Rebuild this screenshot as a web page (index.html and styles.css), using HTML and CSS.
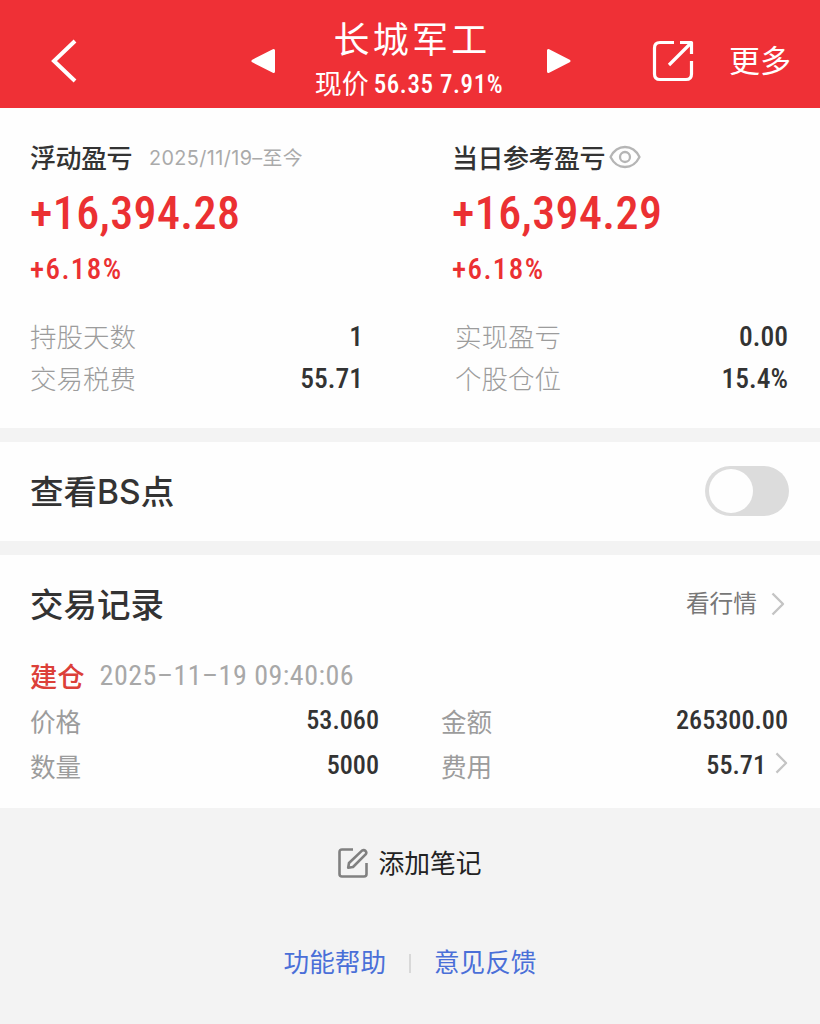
FILE: index.html
```html
<!DOCTYPE html>
<html lang="zh-CN">
<head>
  <meta charset="UTF-8" />
  <title>长城军工 - 持仓详情</title>
  <meta name="viewport" content="width=device-width, initial-scale=1.0"/>
  <link rel="stylesheet" href="styles.css">
</head>
<body>
  <header class="topbar">
    <svg class="back" viewBox="0 0 28 44"><path d="M25 2 L4 22 L25 42"/></svg>
    <div class="stock">
      <svg class="arrow" viewBox="0 0 26 26"><path d="M23.5 2.5 V23.5 L3 13 Z"/></svg>
      <div class="stock-info">
        <h1>长城军工</h1>
        <p><span class="label">现价</span> <span class="num">56.35 7.91%</span></p>
      </div>
      <svg class="arrow" viewBox="0 0 26 26"><path d="M2.5 2.5 V23.5 L23 13 Z"/></svg>
    </div>
    <svg class="share" viewBox="0 0 42 42">
      <path d="M22 2.5 H8 Q2.5 2.5 2.5 8 V34 Q2.5 39.5 8 39.5 H34 Q39.5 39.5 39.5 34 V21"/>
      <path d="M28 2.5 H39.5 V14 M38.5 3.5 L17 25"/>
    </svg>
    <span class="more">更多</span>
  </header>

  <section class="summary">
    <div class="col">
      <div class="col-title">浮动盈亏<span class="range">2025/11/19–至今</span></div>
      <div class="amount">+16,394.28</div>
      <div class="percent">+6.18%</div>
      <div class="row"><span>持股天数</span><b>1</b></div>
      <div class="row"><span>交易税费</span><b>55.71</b></div>
    </div>
    <div class="col col-right">
      <div class="col-title">当日参考盈亏
        <svg class="eye" viewBox="0 0 32 24"><path d="M1.5 12 C5 5 10 2 16 2 S27 5 30.5 12 C27 19 22 22 16 22 S5 19 1.5 12 Z"/><circle cx="16" cy="12" r="5"/></svg>
      </div>
      <div class="amount">+16,394.29</div>
      <div class="percent">+6.18%</div>
      <div class="row"><span>实现盈亏</span><b>0.00</b></div>
      <div class="row"><span>个股仓位</span><b>15.4%</b></div>
    </div>
  </section>

  <section class="bs">
    <h2>查看<span class="latin">BS</span>点</h2>
    <div class="switch"><i></i></div>
  </section>

  <section class="records">
    <div class="records-head">
      <h2>交易记录</h2>
      <a class="quote">看行情 <svg class="chevron" viewBox="0 0 14 24"><path d="M1.5 1.5 L12 12 L1.5 22.5"/></svg></a>
    </div>
    <div class="record-time"><strong>建仓</strong><span>2025–11–19 09:40:06</span></div>
    <div class="record-grid">
      <div class="cell"><span>价格</span><b>53.060</b></div>
      <div class="cell"><span>金额</span><b>265300.00</b></div>
      <div class="cell"><span>数量</span><b>5000</b></div>
      <div class="cell"><span>费用</span><b>55.71</b><svg class="chevron small" viewBox="0 0 14 24"><path d="M1.5 1.5 L12 12 L1.5 22.5"/></svg></div>
    </div>
  </section>

  <div class="add-note">
    <svg viewBox="0 0 30 30">
      <path d="M15 1.5 H4 Q1.5 1.5 1.5 4 V26 Q1.5 28.5 4 28.5 H26 Q28.5 28.5 28.5 26 V15"/>
      <path d="M10.2 19.8 L11 15 L24 2.6 Q26 1.4 27.6 3 Q29 4.6 27.6 6.4 L15 19 Z"/>
    </svg>
    <span>添加笔记</span>
  </div>

  <footer class="links">
    <a>功能帮助</a>
    <i></i>
    <a>意见反馈</a>
  </footer>
</body>
</html>
```

FILE: styles.css
```css
:root {
  --red: #ef3036;
  --text: #333;
  --muted: #9c9c9c;
  --page: #f3f3f3;
  --num: Roboto, "Noto Sans CJK SC", sans-serif;
}

* {
  box-sizing: border-box;
}

body {
  margin: 0;
  background: var(--page);
  color: var(--text);
  font-family: "Noto Sans CJK SC", sans-serif;
}

h1, h2, p {
  margin: 0;
  font-weight: 500;
}

svg {
  display: block;
  flex: none;
  fill: none;
  stroke-linejoin: round;
}

/* header */
.topbar {
  display: flex;
  align-items: center;
  height: 108px;
  padding: 13px 29px 0 50px;
  background: var(--red);
  color: #fff;
  white-space: nowrap;
}

.back {
  width: 28px;
  height: 44px;
  stroke: #fff;
  stroke-width: 4;
  stroke-linejoin: miter;
}

.stock {
  display: flex;
  align-items: center;
  justify-content: space-between;
  width: 322px;
  margin-left: 172px;
}

.arrow {
  width: 26px;
  height: 26px;
  fill: #fff;
  stroke: #fff;
  stroke-width: 3;
}

.stock-info {
  display: flex;
  flex-direction: column;
  align-items: center;
  height: 95px;
}

.stock-info h1 {
  padding-left: 2px;
  font-size: 36px;
  font-weight: 400;
  line-height: 48px;
  letter-spacing: 3.2px;
}

.stock-info p {
  display: flex;
  gap: 5px;
  padding-right: 4px;
  font-size: 27px;
  line-height: 43px;
}

.stock-info .label {
  font-weight: 400;
}

.stock-info .num {
  font-family: var(--num);
  font-size: 25px;
  font-stretch: 75%;
  line-height: 47px;
  letter-spacing: 0.6px;
}

.share {
  width: 42px;
  height: 42px;
  margin-left: 80px;
  stroke: #fff;
  stroke-width: 3.2;
}

.more {
  margin-left: 35px;
  padding-bottom: 4px;
  font-size: 31px;
}

/* profit summary */
.summary {
  display: flex;
  height: 320px;
  padding: 31px 32px 0 30px;
  background: #fefefe;
}

.col {
  width: 333px;
}

.col-right {
  width: 336px;
  margin-left: 89px;
}

.col-title {
  display: flex;
  align-items: center;
  height: 34px;
  font-size: 26px;
  font-weight: 500;
  letter-spacing: -0.5px;
}

.range {
  margin-left: 17px;
  color: #aaa;
  font-family: Inter, "Noto Sans CJK SC", sans-serif;
  font-size: 19.8px;
  font-weight: 400;
  letter-spacing: 0.4px;
}

.eye {
  width: 32px;
  height: 24px;
  margin: 2px 0 0 4px;
  stroke: #b5b5b5;
  stroke-width: 2.3;
}

.amount {
  height: 80px;
  color: #eb3032;
  font: 500 46px/80px var(--num);
  font-stretch: 75%;
  letter-spacing: 0.4px;
}

.percent {
  height: 34px;
  color: #eb3032;
  font: 500 29px/32px var(--num);
  font-stretch: 75%;
  letter-spacing: 1.4px;
}

.row {
  display: flex;
  align-items: center;
  justify-content: space-between;
  height: 42px;
  color: var(--muted);
  font-size: 26.5px;
  font-weight: 300;
}

.row span {
  padding-bottom: 2px;
}

.percent + .row {
  margin-top: 28px;
}

.col-right .row {
  padding-left: 3px;
}

.row b,
.cell b {
  color: var(--text);
  font-family: var(--num);
  font-size: 27.5px;
  font-weight: 500;
  font-stretch: 75%;
}

/* BS switch */
.bs {
  display: flex;
  align-items: center;
  justify-content: space-between;
  height: 99px;
  margin-top: 14px;
  padding: 0 31px 2px 30px;
  background: #fefefe;
}

.bs h2,
.records h2 {
  font-size: 33.5px;
  line-height: 50px;
}

.latin {
  font-family: Inter, sans-serif;
  font-weight: 500;
}

.switch {
  width: 84px;
  height: 50px;
  padding: 3px 4px;
  border-radius: 25px;
  background: #dcdcdc;
}

.switch i {
  display: block;
  width: 44px;
  height: 44px;
  border-radius: 50%;
  background: #fefefe;
}

/* trade records */
.records {
  height: 253px;
  margin-top: 14px;
  padding: 23px 32px 0 30px;
  background: #fefefe;
}

.records-head {
  display: flex;
  align-items: center;
  justify-content: space-between;
  height: 50px;
}

.quote {
  display: flex;
  align-items: center;
  gap: 14px;
  padding: 0 3px 3px 0;
  color: #777;
  font-size: 23.7px;
  line-height: 46px;
}

.chevron {
  width: 14px;
  height: 24px;
  stroke: #c4c4c4;
  stroke-width: 2.4;
}

.quote .chevron {
  margin-top: 5px;
}

.record-time {
  display: flex;
  align-items: center;
  gap: 15px;
  height: 46px;
  margin-top: 24px;
  color: #a8a8a8;
  font-family: var(--num);
  font-size: 28px;
  font-stretch: 75%;
  letter-spacing: 0.5px;
}

.record-time span {
  padding-top: 1px;
}

.record-time strong {
  color: #dc4039;
  font: 500 27.3px "Noto Sans CJK SC", sans-serif;
  letter-spacing: 0;
}

.record-grid {
  display: grid;
  grid-template-columns: 349px 347px;
  column-gap: 62px;
  grid-auto-rows: 45px;
}

.cell {
  display: flex;
  align-items: center;
  color: var(--muted);
  font-size: 25.6px;
}

.cell b {
  margin-left: auto;
  padding-bottom: 2px;
  font-size: 26.2px;
}

.small {
  width: 13px;
  height: 22px;
  margin: 0 0 5px 9px;
}

/* bottom */
.add-note {
  display: flex;
  align-items: center;
  justify-content: center;
  gap: 10px;
  height: 110px;
  color: #222;
  font-size: 25.8px;
}

.add-note span {
  padding-bottom: 3px;
}

.add-note svg {
  width: 30px;
  height: 30px;
  stroke: #808080;
  stroke-width: 2.6;
}

.links {
  display: flex;
  align-items: center;
  justify-content: center;
  gap: 23px;
  height: 88px;
  padding-bottom: 3px;
  color: #4a6fd8;
  font-size: 25.6px;
}

.links i {
  width: 2px;
  height: 19px;
  margin-top: 5px;
  background: #d8d8d8;
}
```
